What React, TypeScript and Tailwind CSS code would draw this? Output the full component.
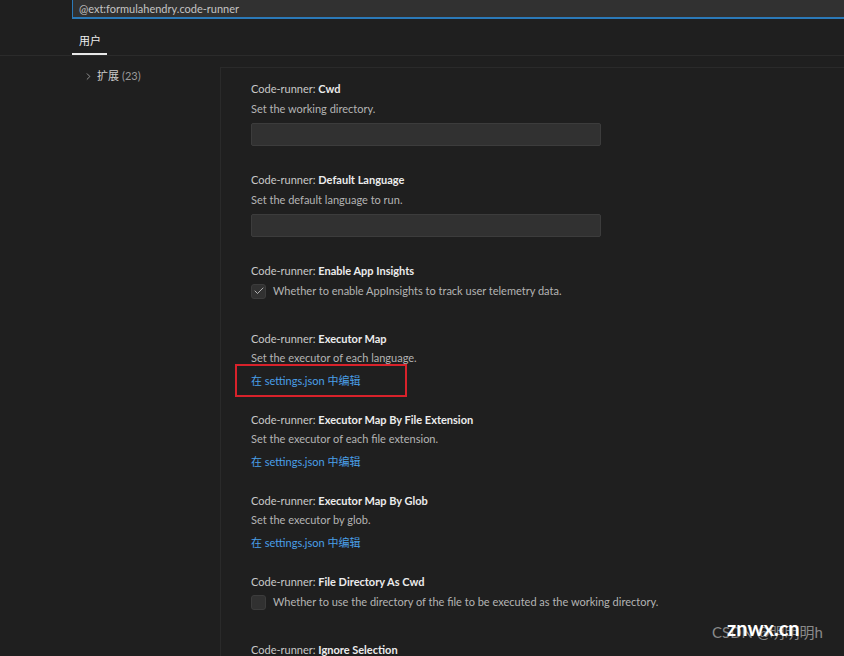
import { ChevronRight, Check } from "lucide-react";

const FONT = { fontFamily: 'Lato, "Noto Sans CJK SC", sans-serif' };

function Title({ name }: { name: string }) {
  return (
    <p className="text-[11px] leading-4 text-[#c8c8c8]">
      Code-runner: <span className="font-bold text-[#ececec]">{name}</span>
    </p>
  );
}

function TextItem({ name, desc }: { name: string; desc: string }) {
  return (
    <div className="pb-[26px]">
      <Title name={name} />
      <p className="mt-1 text-[11px] leading-4 text-[#b4b4b4]">{desc}</p>
      <div className="mt-[6px] h-[23px] w-[350px] rounded-[2px] border border-[#3c3c3c] bg-[#313131]" />
    </div>
  );
}

function CheckItem({ name, desc, checked, pb }: { name: string; desc: string; checked: boolean; pb: string }) {
  return (
    <div className={pb}>
      <Title name={name} />
      <div className="mt-1 flex items-center gap-[7px]">
        <span className="flex h-[15px] w-[15px] items-center justify-center rounded-[3px] border border-[#3c3c3c] bg-[#313131]">
          {checked ? <Check size={12} strokeWidth={1.6} className="text-[#d0d0d0]" /> : null}
        </span>
        <p className="text-[11px] leading-4 text-[#b4b4b4]">{desc}</p>
      </div>
    </div>
  );
}

function LinkItem({ name, desc, marked }: { name: string; desc: string; marked?: boolean }) {
  return (
    <div className="pb-[23px]">
      <Title name={name} />
      <p className="mt-[3px] text-[11px] leading-4 text-[#b4b4b4]">{desc}</p>
      <div className="relative mt-[7px] w-fit text-[11px] leading-4">
        <span className="text-[#4a9fe8]">在 settings.json 中编辑</span>
        {marked ? (
          <span className="absolute left-[-16px] top-[-9px] h-[33px] w-[172px] border-2 border-[#d8222b]" />
        ) : null}
      </div>
    </div>
  );
}

export default function App() {
  return (
    <div className="relative h-[656px] w-[844px] overflow-hidden bg-[#1f1f1f]" style={FONT}>
      <div className="ml-[72px] flex h-[19px] items-center border-b-2 border-l border-[#2b79b8] bg-[#313131] pl-[6px] text-[11px] leading-4">
        <span className="text-[#c4c4c4]">@ext:formulahendry.code-runner</span>
      </div>

      <div className="mt-[14px] border-b border-[#2b2b2b]">
        <div className="ml-[72px] w-[35px] border-b-2 border-[#e8e8e8] pb-[4px] pl-[7px] text-[11px] leading-4">
          <span className="text-[#eeeeee]">用户</span>
        </div>
      </div>

      <div className="mt-[11px] flex">
        <div className="w-[220px] shrink-0 pl-[83px] pt-[1px]">
          <div className="flex items-center gap-[3px] text-[11px] leading-4">
            <ChevronRight size={11} strokeWidth={1.5} className="text-[#c0c0c0]" />
            <span className="text-[#cccccc]">扩展</span>
            <span className="text-[#9a9a9a]">(23)</span>
          </div>
        </div>
        <div className="h-[600px] flex-1 border-l border-t border-[#2a2a2a] bg-[#1f1f1f] pl-[30px] pt-[13px]">
          <TextItem name="Cwd" desc="Set the working directory." />
          <TextItem name="Default Language" desc="Set the default language to run." />
          <CheckItem
            name="Enable App Insights"
            desc="Whether to enable AppInsights to track user telemetry data."
            checked
            pb="pb-[32px]"
          />
          <LinkItem name="Executor Map" desc="Set the executor of each language." marked />
          <LinkItem name="Executor Map By File Extension" desc="Set the executor of each file extension." />
          <LinkItem name="Executor Map By Glob" desc="Set the executor by glob." />
          <CheckItem
            name="File Directory As Cwd"
            desc="Whether to use the directory of the file to be executed as the working directory."
            checked={false}
            pb="pb-[32px]"
          />
          <Title name="Ignore Selection" />
        </div>
      </div>

      <div className="absolute left-[712px] top-[622px] text-[15px] leading-5 text-[#8a8a8a]">CSDN @明明明h</div>
      <div className="absolute left-[727px] top-[616px] text-[20px] font-bold leading-6 text-white">znwx.cn</div>
    </div>
  );
}
